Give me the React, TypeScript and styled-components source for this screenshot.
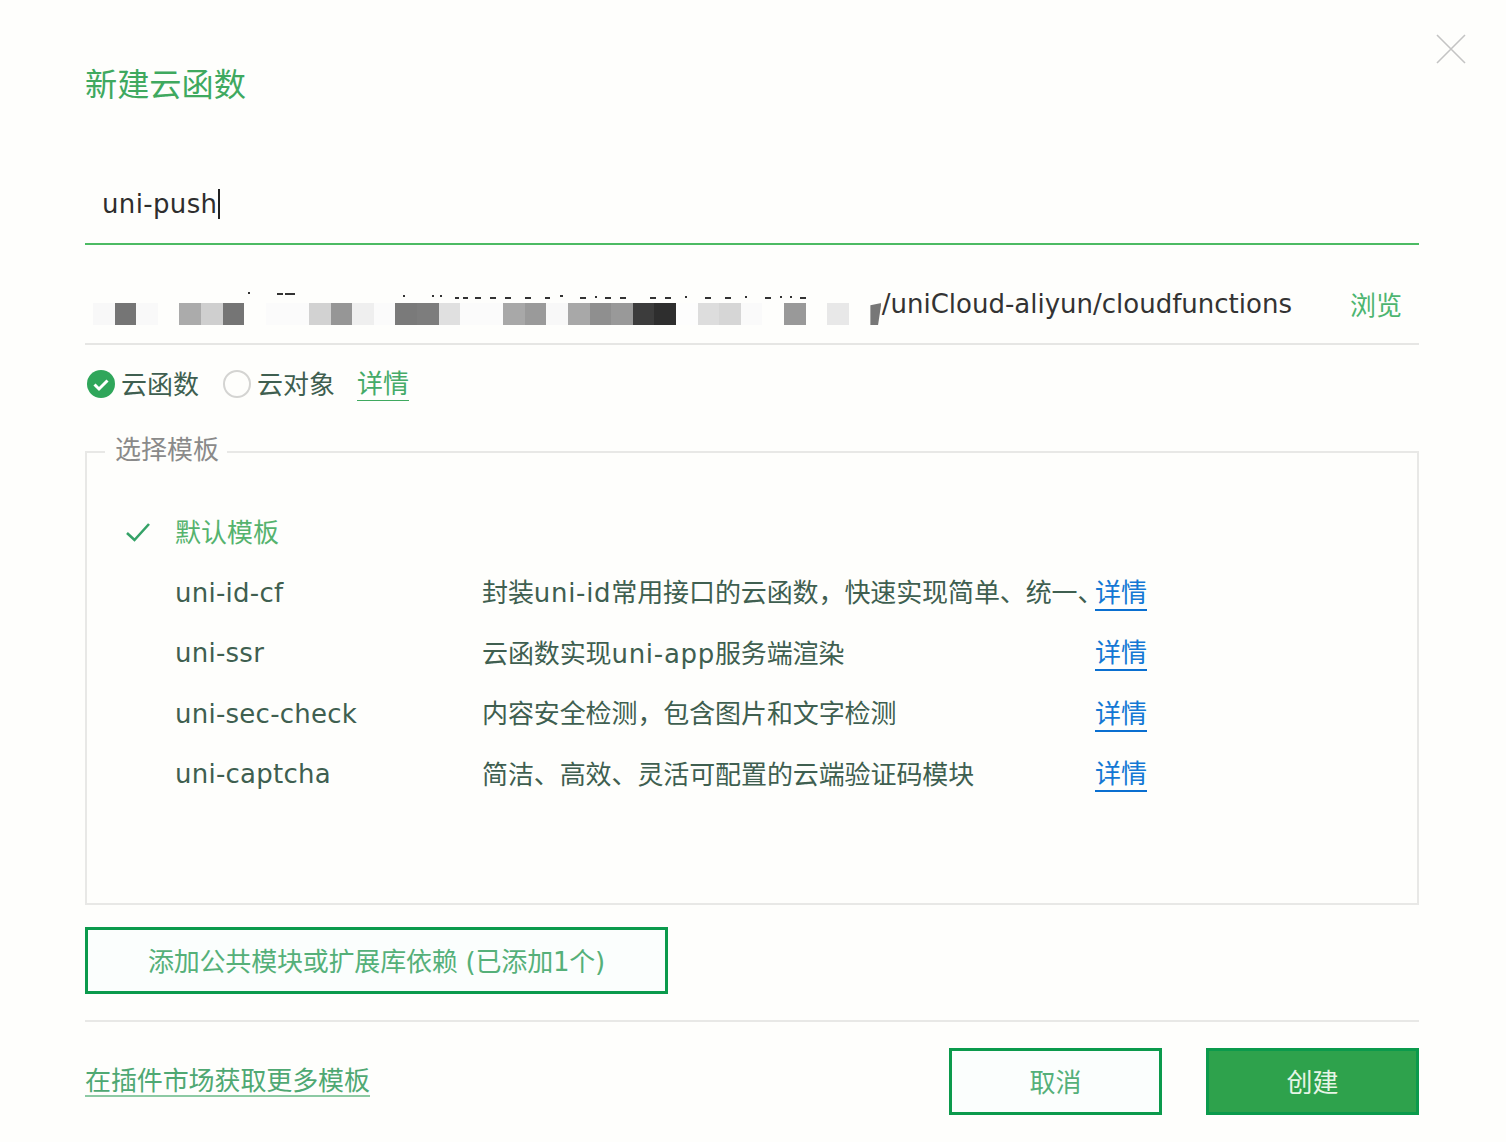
import React from 'react'
import styled, { createGlobalStyle } from 'styled-components'

const FONT = `"DejaVu Sans", "Noto Sans CJK SC", sans-serif`

const GlobalStyle = createGlobalStyle`
  html, body {
    margin: 0;
    padding: 0;
    background: #fefefc;
  }
  body {
    font-family: ${FONT};
    color: #333;
  }
`

const Page = styled.div`
  position: relative;
  box-sizing: border-box;
  width: 1506px;
  height: 1142px;
  padding: 65px 87px 0 85px;
  overflow: hidden;
`

const CloseIcon = styled.svg`
  position: absolute;
  top: 34px;
  right: 40px;
  width: 30px;
  height: 30px;
`

const Title = styled.h1`
  margin: 0;
  height: 40px;
  font-size: 32.2px;
  font-weight: 400;
  line-height: 40px;
  color: #3fa95f;
`

const NameField = styled.div`
  display: flex;
  align-items: center;
  box-sizing: border-box;
  height: 83px;
  margin-top: 57px;
  padding: 2px 0 0 17px;
  border-bottom: 2px solid #4cbb63;
  font-size: 26px;
  letter-spacing: 0.35px;
  color: #2e2e2e;
`

const Caret = styled.span`
  display: inline-block;
  width: 2px;
  height: 30px;
  margin-left: 1px;
  background: #222;
`

const PathRow = styled.div`
  position: relative;
  display: flex;
  align-items: center;
  justify-content: space-between;
  box-sizing: border-box;
  height: 100px;
  padding: 19px 17px 0 0;
  border-bottom: 2px solid #e6e6e4;
`

const PathText = styled.span`
  margin-left: auto;
  font-size: 26px;
  color: #333;
`

const Browse = styled.a`
  margin-left: 58px;
  font-size: 26px;
  color: #4cb570;
`

const Mosaic = styled.div`
  position: absolute;
  left: 8px;
  top: 58px;
  display: flex;
`

const Pixel = styled.span<{ $shade: string }>`
  width: 21.6px;
  height: 22px;
  background: ${(p) => p.$shade};
`

const Sliver = styled.span`
  width: 11px;
  height: 22px;
  background: #777;
  clip-path: polygon(0 10%, 100% 0, 70% 100%, 0 100%);
`

const Specks = styled.svg`
  position: absolute;
  left: 150px;
  top: 45px;
  width: 680px;
  height: 12px;
`

const TypeRow = styled.div`
  display: flex;
  align-items: center;
  height: 78px;
  padding-left: 2px;
  font-size: 26px;
  color: #3f5f50;
`

const RadioOption = styled.label`
  display: flex;
  align-items: center;
  gap: 6px;
  margin-right: 24px;
`

const OptionText = styled.span`
  margin-bottom: 4px;
`

const RadioOff = styled.span`
  display: block;
  box-sizing: border-box;
  width: 28px;
  height: 28px;
  border: 2px solid #d4d4d2;
  border-radius: 50%;
`

const DetailLink = styled.a`
  margin-left: -2px;
  border-bottom: 1px solid #3fa95f;
  line-height: 32px;
  color: #45ab68;
`

const TemplateBox = styled.fieldset`
  box-sizing: border-box;
  height: 470px;
  margin: 12px 0 0;
  padding: 33px 0 0 0;
  border: 2px solid #e8e8e6;
  min-width: 0;
`

const BoxLegend = styled.legend`
  margin-left: 18px;
  padding: 0 8px 4px 10px;
  font-size: 26px;
  line-height: 30px;
  color: #8a8a8a;
`

const TemplateRow = styled.div`
  display: grid;
  grid-template-columns: 38px 50px 307px 613px auto;
  align-items: center;
  height: 60.5px;
  font-size: 26px;
  color: #3f5f50;
`

const DefaultLabel = styled.span`
  grid-column: 3;
  margin-bottom: 4px;
  color: #55b36e;
`

const TemplateName = styled.span`
  grid-column: 3;
  letter-spacing: 0.25px;
`

const TemplateDesc = styled.span`
  margin-bottom: 4px;
  white-space: nowrap;
  letter-spacing: -0.1px;
`

const Latin = styled.span`
  letter-spacing: 0.7px;
`

const HalfMark = styled.span`
  font-feature-settings: "halt";
`

const BlueLink = styled.a`
  justify-self: start;
  margin-top: 3px;
  border-bottom: 2px solid #0a6fd0;
  line-height: 31px;
  color: #1478d4;
`

const CheckMark = styled.svg`
  grid-column: 2;
  width: 26px;
  height: 24px;
`

const DepsButton = styled.button`
  display: block;
  box-sizing: border-box;
  width: 583px;
  height: 67px;
  margin-top: 22px;
  padding: 0 0 2px;
  border: 3px solid #0b9a4c;
  background: #fbfefd;
  font-family: ${FONT};
  font-size: 26px;
  letter-spacing: -0.2px;
  color: #55b079;
`

const Divider = styled.div`
  height: 2px;
  margin-top: 26px;
  background: #e8e8e6;
`

const Footer = styled.div`
  display: flex;
  align-items: center;
  gap: 44px;
  margin-top: 26px;
`

const MarketLink = styled.a`
  margin: 2px auto 0 0;
  border-bottom: 2px solid #8cc9a3;
  line-height: 27px;
  font-size: 26px;
  letter-spacing: -0.1px;
  color: #4fa873;
`

const ActionButton = styled.button<{ $primary?: boolean }>`
  box-sizing: border-box;
  width: 213px;
  height: 67px;
  padding: 0 0 3px;
  border: 3px solid #0b9a4c;
  background: ${(p) => (p.$primary ? '#2ea24c' : '#fbfefd')};
  font-family: ${FONT};
  font-size: 26px;
  color: ${(p) => (p.$primary ? '#e6f5e6' : '#55b079')};
`

const pixels = [
  '#f8f8f8', '#757575', '#f9f9f9', '#fefefc', '#ababab', '#cfcfcf', '#757575', '#fefefc',
  '#fbfbfb', '#fbfbfb', '#d2d2d2', '#969696', '#efefef', '#fbfbfb', '#7a7a7a', '#7d7d7d',
  '#e0e0e0', '#fbfbfb', '#fbfbfb', '#a8a8a8', '#9a9a9a', '#f8f8f8', '#a8a8a8', '#8f8f8f',
  '#999999', '#3c3c3c', '#2e2e2e', '#fdfdfd', '#dddddd', '#d6d6d6', '#fafafa', '#fefefc',
  '#999999', '#fefefc', '#e8e8e8', '#fefefc',
]

const templates = [
  { name: 'uni-id-cf', desc: <>封装<Latin>uni-id</Latin>常用接口的云函数，快速实现简单、统一<HalfMark>、</HalfMark></> },
  { name: 'uni-ssr', desc: <>云函数实现<Latin>uni-app</Latin>服务端渲染</> },
  { name: 'uni-sec-check', desc: <>内容安全检测，包含图片和文字检测</> },
  { name: 'uni-captcha', desc: <>简洁、高效、灵活可配置的云端验证码模块</> },
]

const App = () => (
  <Page>
    <GlobalStyle />
    <CloseIcon viewBox="0 0 30 30">
      <path d="M1 1L29 29M29 1L1 29" stroke="#c4c4c4" strokeWidth="1.6" fill="none" />
    </CloseIcon>
    <Title>新建云函数</Title>
    <NameField>
      uni-push<Caret />
    </NameField>
    <PathRow>
      <Specks viewBox="0 0 680 12">
        <path
          d="M13 3h2M42 4h6M50 4h10M168 6h2M197 6h2M205 6h2M220 8h4M228 8h5M240 8h6M255 8h6M270 8h6M290 8h6M310 8h5M325 6h3M345 8h6M360 7h2M370 8h6M385 8h6M415 8h6M430 8h6M450 7h2M470 8h6M490 8h6M510 7h2M530 8h6M545 7h2M555 7h2M565 8h6"
          stroke="#333"
          strokeWidth="2"
          fill="none"
        />
      </Specks>
      <Mosaic>
        {pixels.map((shade, i) => (
          <Pixel key={i} $shade={shade} />
        ))}
        <Sliver />
      </Mosaic>
      <PathText>/uniCloud-aliyun/cloudfunctions</PathText>
      <Browse>浏览</Browse>
    </PathRow>
    <TypeRow>
      <RadioOption>
        <svg width="28" height="28" viewBox="0 0 28 28">
          <circle cx="14" cy="14" r="14" fill="#2fa65a" />
          <path d="M7.5 14.5L12 19L20.5 10.5" stroke="#fff" strokeWidth="3" fill="none" />
        </svg>
        <OptionText>云函数</OptionText>
      </RadioOption>
      <RadioOption>
        <RadioOff />
        <OptionText>云对象</OptionText>
      </RadioOption>
      <DetailLink>详情</DetailLink>
    </TypeRow>
    <TemplateBox>
      <BoxLegend>选择模板</BoxLegend>
      <TemplateRow>
        <CheckMark viewBox="0 0 26 24">
          <path d="M2 13L9.5 20L24 4" stroke="#35a267" strokeWidth="2.6" fill="none" />
        </CheckMark>
        <DefaultLabel>默认模板</DefaultLabel>
      </TemplateRow>
      {templates.map((t) => (
        <TemplateRow key={t.name}>
          <TemplateName>{t.name}</TemplateName>
          <TemplateDesc>{t.desc}</TemplateDesc>
          <BlueLink>详情</BlueLink>
        </TemplateRow>
      ))}
    </TemplateBox>
    <DepsButton>添加公共模块或扩展库依赖 (已添加1个)</DepsButton>
    <Divider />
    <Footer>
      <MarketLink>在插件市场获取更多模板</MarketLink>
      <ActionButton>取消</ActionButton>
      <ActionButton $primary>创建</ActionButton>
    </Footer>
  </Page>
)

export default App
